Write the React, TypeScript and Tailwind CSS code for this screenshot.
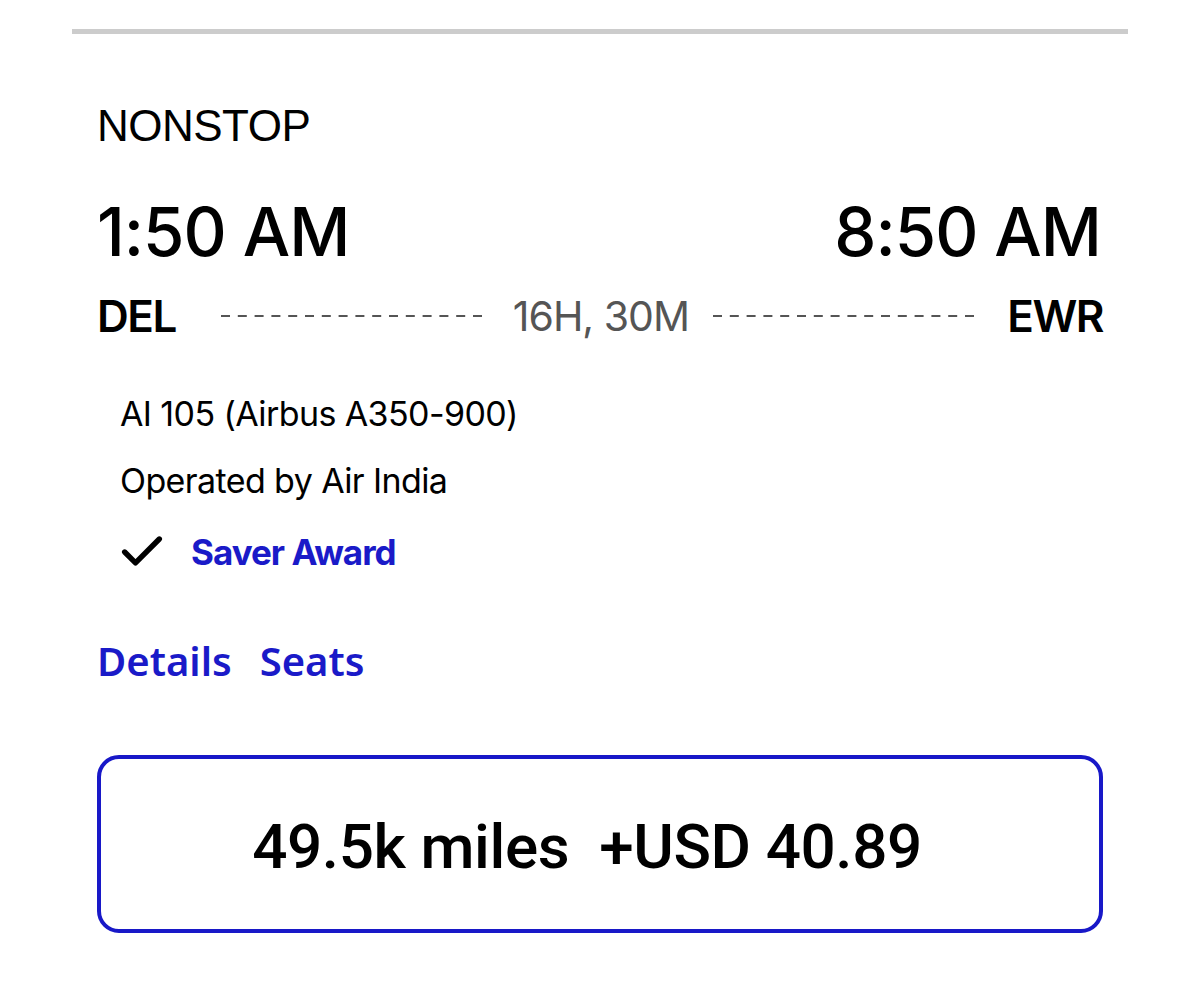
import { Check } from 'lucide-react';

function Dashes() {
  return (
    <svg className="h-[4px] w-[268px]" viewBox="0 0 268 4">
      <line x1="0" y1="2" x2="268" y2="2" stroke="#555" strokeWidth="2" strokeDasharray="9 7.8" />
    </svg>
  );
}

export default function App() {
  return (
    <div className="min-h-[988px] bg-white font-['Inter',sans-serif] text-black">
      <div className="mx-[72px] pt-[29px]">
        <div className="h-[5px] bg-[#cccccc]" />
      </div>

      <div className="px-[97px] pt-[70px]">
        {/* Stops */}
        <div className="font-['Liberation_Sans',sans-serif] text-[44px] leading-none tracking-[-0.5px]">NONSTOP</div>

        {/* Times */}
        <div className="mt-[50px] flex items-baseline justify-between text-[67px] font-medium leading-none tracking-[-1px]">
          <span>1:50 AM</span>
          <span className="mr-[2px]">8:50 AM</span>
        </div>

        {/* Route */}
        <div className="mt-[29px] flex items-center text-[44px] font-semibold leading-none tracking-[-1.5px]">
          <span>DEL</span>
          <div className="ml-[45px] flex items-center">
            <Dashes />
          </div>
          <span className="ml-[24px] text-[41px] font-normal tracking-[-1px] text-[#555555]">16H, 30M</span>
          <div className="ml-[24px] flex items-center">
            <Dashes />
          </div>
          <span className="ml-auto">EWR</span>
        </div>

        {/* Flight info */}
        <div className="pl-[23px] pt-[59px] text-[34px] leading-none tracking-[-0.6px]">
          <div>AI 105 (Airbus A350-900)</div>
          <div className="mt-[33px]">Operated by Air India</div>
          <div className="mt-[28px] flex items-center">
            <Check className="h-[52px] w-[52px] -ml-[4px]" strokeWidth={2.5} />
            <span className="ml-[23px] text-[35px] font-bold tracking-[-1px] text-[#1a1ac8]">Saver Award</span>
          </div>
        </div>

        {/* Links */}
        <div className="mt-[63px] flex gap-[28px] font-['Noto_Sans',sans-serif] text-[40px] font-semibold leading-none text-[#1a1ac8]">
          <span>Details</span>
          <span>Seats</span>
        </div>

        {/* Price button */}
        <button className="mt-[74px] flex h-[178px] w-full items-center justify-center rounded-[22px] border-[4px] border-[#1818c8] bg-white pr-[26px] pt-[6px]">
          <span className="font-['Roboto',sans-serif] text-[62px] font-medium leading-none tracking-[-0.4px]">
            49.5k miles&nbsp; +USD 40.89
          </span>
        </button>
      </div>
    </div>
  );
}
